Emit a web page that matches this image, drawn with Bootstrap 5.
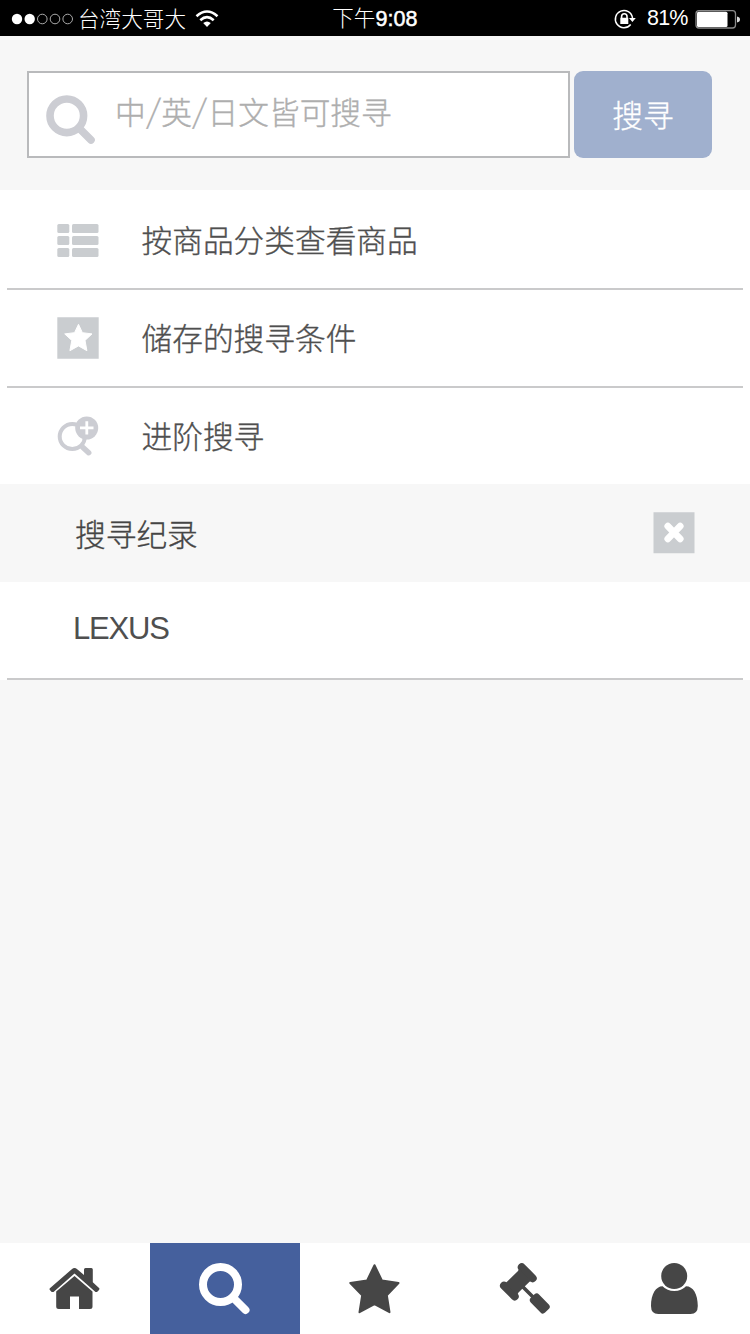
<!DOCTYPE html>
<html lang="zh-Hans">
<head>
<meta charset="utf-8">
<meta name="viewport" content="width=device-width, initial-scale=1">
<title>搜寻</title>
<link rel="stylesheet" href="https://cdn.jsdelivr.net/npm/bootstrap@5.3.0/dist/css/bootstrap.min.css">
<style>
  body { height: 1334px; background: #f7f7f7; color: #4f4f4f; overflow: hidden;
    font-family: "Liberation Sans", "Noto Sans CJK SC", sans-serif; font-size: 30.7px; line-height: 1; }
  svg { display: block; flex: none; }
  .cjk { font-family: "Noto Sans CJK SC", sans-serif; font-weight: 300; white-space: nowrap; line-height: 46px; -webkit-text-stroke: .35px currentColor; }
  .status { height: 36px; background: #000; color: #fff; font-size: 21.6px; display: grid; grid-template-columns: 1fr auto 1fr; }
  .status .cjk { line-height: 34px; padding-bottom: 2px; -webkit-text-stroke: 0; }
  .clock { font-size: 21.5px; }
  .clock b, .pct { font-family: "Liberation Sans", sans-serif; }
  .clock b { font-weight: 400; -webkit-text-stroke: .5px #fff; letter-spacing: .1px; }
  .pct { font-size: 21.5px; letter-spacing: -.8px; width: 47px; }
  .searchbar { height: 154px; padding: 35px 38px 0 27px; gap: 4px; }
  .field { height: 87px; background: #fff; border: 2px solid #b9babc; color: #aeaeae; padding-left: 16px; }
  .hint { margin: 14.5px 0 0 16px; }
  .slash { display: inline-block; width: 15.6px; text-align: center; transform: translateY(-2px) scaleY(1.05) skewX(-6deg); }
  .go { width: 138px; height: 87px; border-radius: 9px; background: #a0b0ce; color: #fff; font-size: 30.7px; padding: 0 0 1px; border: 0; }
  .go:hover { background: #a0b0ce; color: #fff; }
  .entry { height: 98px; margin: 0; padding: 0 0 0 49px; border: 0; border-radius: 0; background: transparent; color: inherit; }
  .list-group > .entry.ruled { border-bottom: 2px solid #cacacb; }
  .menu { background: #fff; padding: 2px 7px 0; height: 294px; }
  .menu .entry svg { margin-right: 42.5px; }
  .menu .entry span { padding-bottom: 2px; }
  .menu .entry:first-child svg { margin-top: -1px; }
  .menu .entry:last-child { height: 96px; }
  .history-head { height: 98px; padding: 0 55px 0 75px; color: #454545; }
  .history { height: 98px; background: #fff; padding: 0 7px; }
  .history .entry { padding: 0 0 3px 66px; letter-spacing: -1.2px; font-size: 31px; }
  .tabs { height: 91px; background: #fff; color: #464646; }
  .tabs .nav-link { padding: 0; border-radius: 0; color: inherit; flex: 1 1 0; }
  .tabs .nav-link.active { background: #45609d; color: #fff; }
</style>
<script src="https://cdn.jsdelivr.net/npm/bootstrap@5.3.0/dist/js/bootstrap.bundle.min.js"></script>
</head>
<body class="d-flex flex-column">
<header class="status align-items-center">
  <div class="d-flex align-items-center">
    <svg width="78" height="36" viewBox="0 0 78 36"><g fill="#fff"><circle cx="17" cy="18" r="5.2"/><circle cx="29.7" cy="18" r="5.2"/></g><g fill="none" stroke="#aaa" stroke-width="1"><circle cx="42.3" cy="18" r="4.8"/><circle cx="55" cy="18" r="4.8"/><circle cx="67.7" cy="18" r="4.8"/></g></svg>
    <span class="cjk">台湾大哥大</span>
    <svg width="37" height="36" viewBox="186 0 37 36"><g fill="none" stroke="#fff" stroke-width="2.6"><path d="M196.5 15.2Q207 5.8 217.5 15.2"/><path d="M200.3 19.2Q207 13.2 213.700 19.2"/></g><path fill="#fff" d="M203.200 22.100Q207 19 210.800 22.100L207 26Z"/></svg>
  </div>
  <div class="cjk clock">下午<b>9:08</b></div>
  <div class="d-flex align-items-center justify-content-end">
    <svg width="34" height="36" viewBox="613 0 34 36"><g fill="none" stroke="#fff"><path stroke-width="1.500" d="M630.700 23.500A8.600 8.600 0 1 1 632.500 17"/><path stroke-width="1.600" d="M621.600 17V15.500A2.700 2.700 0 0 1 627 15.500V17"/></g><path fill="#fff" d="M629 17H635.800L632.400 21ZM620.300 16.800H628.300V23H620.300Z"/></svg>
    <span class="pct">81%</span>
    <svg width="56" height="36" viewBox="694 0 56 36"><rect x="696" y="9.700" width="39.500" height="17.300" rx="3" fill="none" stroke="#8a8a8a" stroke-width="1.300"/><rect x="697" y="10.700" width="30.500" height="15.300" rx="1.500" fill="#fff"/><path fill="#ddd" d="M737 15.500Q740 16.200 740 18.500T737 21.500Z"/></svg>
  </div>
</header>

<form class="searchbar d-flex">
  <div class="field flex-grow-1 d-flex">
    <svg width="54" height="83" viewBox="45 73 54 83"><g fill="none" stroke="#cccdd3"><circle cx="66.800" cy="115.800" r="16.800" stroke-width="7.600"/><path d="M79 128L91 140" stroke-width="7.600" stroke-linecap="round"/></g></svg>
    <div class="cjk hint">中<span class="slash">/</span>英<span class="slash">/</span>日文皆可搜寻</div>
  </div>
  <button type="button" class="btn go cjk">搜寻</button>
</form>

<nav class="menu list-group list-group-flush cjk">
  <a class="entry ruled list-group-item d-flex align-items-center" href="#">
    <svg width="43" height="40" viewBox="56 219 43 40" fill="#cacdd0"><rect x="57.300" y="223" width="12" height="9" rx="1.500"/><rect x="72" y="223" width="26.500" height="9" rx="1.500"/><rect x="57.300" y="235" width="12" height="9" rx="1.500"/><rect x="72" y="235" width="26.500" height="9" rx="1.500"/><rect x="57.300" y="247" width="12" height="9" rx="1.500"/><rect x="72" y="247" width="26.500" height="9" rx="1.500"/></svg><span>按商品分类查看商品</span></a>
  <a class="entry ruled list-group-item d-flex align-items-center" href="#">
    <svg width="43" height="44" viewBox="56 315 43 44"><path fill="#cacdd0" d="M57.300 316.300H98.700V357.800H57.300Z"/><path fill="#fff" stroke="#fff" stroke-linejoin="round" d="M78.500 323.300L82.400 331.700L92 332.900L85 339.400L86.900 349.700L78.500 344.900L69.900 349.700L71.800 339.400L64.700 332.900L74.500 331.700Z"/></svg><span>储存的搜寻条件</span></a>
  <a class="entry list-group-item d-flex align-items-center" href="#">
    <svg width="43" height="44" viewBox="56 413 43 44"><g fill="none" stroke="#cccdd3"><circle cx="72.300" cy="435.500" r="12.600" stroke-width="4"/><path stroke-width="5.500" stroke-linecap="round" d="M83 446.500L88.700 451.700"/></g><circle cx="86.700" cy="427" r="11.500" fill="#cccdd3"/><path d="M86.800 420.200V433.400M80 426.900H93.500" stroke="#fff" stroke-width="2.800"/></svg><span>进阶搜寻</span></a>
</nav>

<div class="history-head d-flex align-items-center justify-content-between">
  <span class="cjk">搜寻纪录</span>
  <svg width="42" height="42" viewBox="653 512 42 42"><path fill="#cacdd0" d="M653.500 512.300H694.500V553.300H653.500Z"/><path stroke="#fff" stroke-width="6.800" stroke-linecap="round" d="M667.800 526.200L680.200 538.900M680.200 526.200L667.800 538.900"/></svg>
</div>
<div class="history list-group list-group-flush"><a class="entry ruled list-group-item d-flex align-items-center" href="#">LEXUS</a></div>

<nav class="tabs nav nav-pills flex-nowrap mt-auto">
  <a class="nav-link" href="#"><svg width="150" height="91" viewBox="0 1243 150 91" fill="currentColor"><path d="M74.500 1276L92.500 1291.500V1306.500Q92.500 1309 90 1309H79V1296.500H70V1309H58.700Q56.200 1309 56.200 1306.500V1291.500Z"/><path d="M49.600 1288.500L71.800 1269.200Q74.500 1267 77.200 1269.200L84 1275V1269.500Q84 1268 85.500 1268H91.400Q92.800 1268 92.800 1269.500V1282.300L99.300 1288.300Q99.700 1289.200 98.800 1290.200L97 1292L95.500 1291.900L74.500 1273.400L53.500 1291.900L51.700 1292L49.600 1289.800Z"/></svg></a>
  <a class="nav-link active" href="#"><svg width="150" height="91" viewBox="150 1243 150 91"><g fill="none" stroke="currentColor" stroke-width="8"><circle cx="220.500" cy="1284.500" r="17.500"/><path d="M233 1297.500L245.500 1310" stroke-linecap="round"/></g></svg></a>
  <a class="nav-link" href="#"><svg width="150" height="91" viewBox="300 1243 150 91"><path fill="currentColor" stroke="currentColor" stroke-width="2" stroke-linejoin="round" d="M374.500 1265.200L382 1280.600L398.500 1283L386.800 1295.200L389.500 1312.200L374.500 1304.200L359.500 1312.200L362.200 1295.200L350.300 1283L367 1280.600Z"/></svg></a>
  <a class="nav-link" href="#"><svg width="150" height="91" viewBox="450 1243 150 91"><g fill="none" stroke="currentColor" stroke-linecap="round"><path stroke-width="8" d="M521.800 1267.200L532.700 1278.200M504 1285.700L514.700 1296.400"/><path stroke-width="3.600" d="M520 1284L533 1297"/></g><path fill="currentColor" d="M519 1268.800L531 1281.200L529.500 1281.800L518.500 1292.500L517 1295L505.200 1283.200L507.500 1281.200L518 1271Z"/><rect x="529.500" y="1297.700" width="20.500" height="11.500" rx="3.200" transform="rotate(46 539.750 1303.500)" fill="currentColor"/></svg></a>
  <a class="nav-link" href="#"><svg width="150" height="91" viewBox="600 1243 150 91" fill="currentColor"><circle cx="674.200" cy="1276" r="13"/><path d="M662.600 1286.300Q667 1291 674.300 1291T686 1286.300C693 1286.300 697.800 1294 697.800 1306Q697.800 1314 690.500 1314H658.300Q651 1314 651 1306C651 1294 656 1286.300 662.600 1286.300Z"/></svg></a>
</nav>
</body>
</html>
